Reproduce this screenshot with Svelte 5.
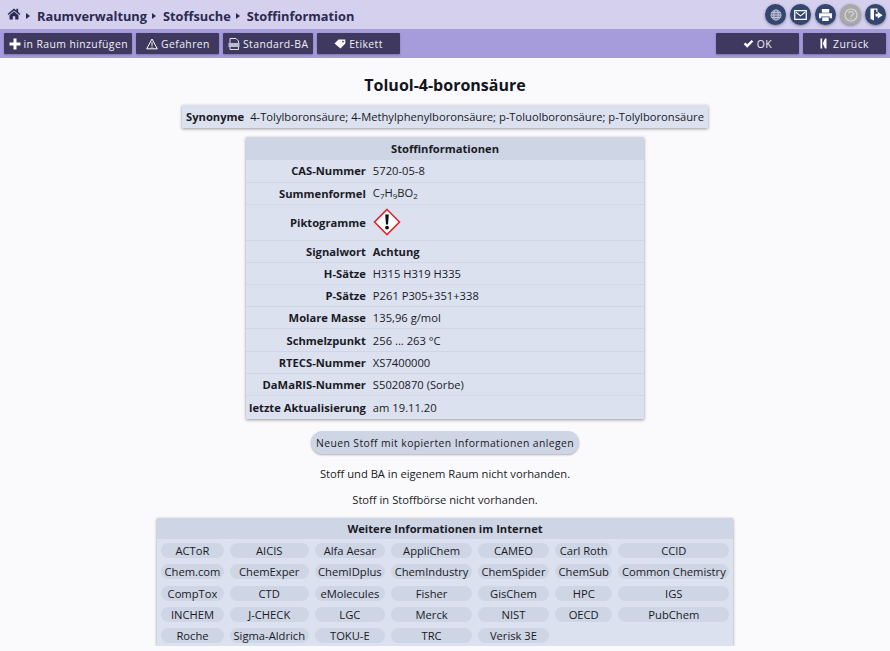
<script>
    const buttonsLeft = [
        { label: 'in Raum hinzufügen', icon: 'plus' },
        { label: 'Gefahren', icon: 'warn' },
        { label: 'Standard-BA', icon: 'pdf' },
        { label: 'Etikett', icon: 'tag' }
    ];

    const rows = [
        ['CAS-Nummer', '5720-05-8'],
        ['Summenformel', 'formula'],
        ['Piktogramme', 'ghs'],
        ['Signalwort', 'Achtung'],
        ['H-Sätze', 'H315 H319 H335'],
        ['P-Sätze', 'P261 P305+351+338'],
        ['Molare Masse', '135,96 g/mol'],
        ['Schmelzpunkt', '256 ... 263 °C'],
        ['RTECS-Nummer', 'XS7400000'],
        ['DaMaRIS-Nummer', 'S5020870 (Sorbe)'],
        ['letzte Aktualisierung', 'am 19.11.20']
    ];

    const links = [
        'ACToR', 'AICIS', 'Alfa Aesar', 'AppliChem', 'CAMEO', 'Carl Roth', 'CCID',
        'Chem.com', 'ChemExper', 'ChemIDplus', 'ChemIndustry', 'ChemSpider', 'ChemSub', 'Common Chemistry',
        'CompTox', 'CTD', 'eMolecules', 'Fisher', 'GisChem', 'HPC', 'IGS',
        'INCHEM', 'J-CHECK', 'LGC', 'Merck', 'NIST', 'OECD', 'PubChem',
        'Roche', 'Sigma-Aldrich', 'TOKU-E', 'TRC', 'Verisk 3E'
    ];
</script>

<header class="topbar">
    <nav class="crumbs">
        <svg class="home" viewBox="0 0 16 14" width="14" height="12">
            <path d="M8 0.5 L0.5 7 L1.6 8.2 L8 2.8 L14.4 8.2 L15.5 7 L12.8 4.6 V1 H10.8 V2.9 Z" fill="#2b2a50" />
            <path d="M8 4 L2.8 8.4 V13.5 H6.6 V9.6 H9.4 V13.5 H13.2 V8.4 Z" fill="#2b2a50" />
        </svg>
        <span class="arrow"></span><span>Raumverwaltung</span>
        <span class="arrow"></span><span>Stoffsuche</span>
        <span class="arrow"></span><span>Stoffinformation</span>
    </nav>
    <div class="rounds">
        <span class="round">
            <svg viewBox="0 0 12 12" width="12" height="12" fill="#6f7aa0" stroke="#c9c5d8" stroke-width="0.9">
                <circle cx="6" cy="6" r="5" /><ellipse cx="6" cy="6" rx="2.2" ry="5" /><path d="M1 6H11M1.7 3.5H10.3M1.7 8.5H10.3" />
            </svg>
        </span>
        <span class="round">
            <svg viewBox="0 0 14 11" width="13" height="10">
                <rect x="0.7" y="0.7" width="12.6" height="9.6" fill="#33466f" stroke="#fff" stroke-width="1.4" />
                <path d="M2 2.5 L7 6.5 L12 2.5" fill="none" stroke="#fff" stroke-width="1.2" />
            </svg>
        </span>
        <span class="round">
            <svg viewBox="0 0 14 13" width="13" height="12" fill="#fff">
                <path d="M3 0H11V4H3Z" />
                <path d="M0 4.5H14V10H11.5V8H2.5V10H0Z" />
                <path d="M3.5 9H10.5V13H3.5Z" />
            </svg>
        </span>
        <span class="round off">
            <svg viewBox="0 0 14 14" width="14" height="14" fill="none" stroke="#d6d6d6" stroke-width="1.2">
                <circle cx="7" cy="7" r="6" />
                <path d="M4.6 5.2 C4.8 3 9.4 3 9.4 5.4 C9.4 7 7 7 7 9" /><path d="M7 10V11.2" />
            </svg>
        </span>
        <span class="round">
            <svg viewBox="0 0 14 14" width="14" height="14" fill="#fff">
                <path d="M1.5 0.5H8.5V4H7.3V1.7H5V12.5L1.5 11Z" />
                <path d="M8.8 3.8 L13.5 7.2 L8.8 10.6 V8.6 H6.5 V5.8 H8.8 Z" />
            </svg>
        </span>
    </div>
</header>

<div class="toolbar">
    <div class="group">
        {#each buttonsLeft as b}
            <button class="tool">
                {#if b.icon === 'plus'}
                    <svg viewBox="0 0 12 12" width="12" height="12"><path d="M4.5 0.5H7.5V4.5H11.5V7.5H7.5V11.5H4.5V7.5H0.5V4.5H4.5Z" fill="#fff" /></svg>
                {:else if b.icon === 'warn'}
                    <svg viewBox="0 0 12 12" width="12" height="12" fill="none" stroke="#fff" stroke-width="1"><path d="M6 1 L11.3 10.8 H0.7 Z" /><path d="M6 4.2V7.8M6 8.6V9.8" /></svg>
                {:else if b.icon === 'pdf'}
                    <svg viewBox="0 0 12 12" width="12" height="12"><path d="M2 0.5H8 L10.5 3 V11.5 H2Z" fill="none" stroke="#dfe0ea" stroke-width="1" /><rect x="0.5" y="5" width="11" height="4" fill="#b9bdd0" /></svg>
                {:else}
                    <svg viewBox="0 0 12 10" width="12" height="10"><path d="M0.5 4.5 L4.5 0.6 H11.3 V4.6 L6.5 9.6 Z" fill="#fff" /><circle cx="9" cy="2.6" r="0.9" fill="#3f3960" /></svg>
                {/if}
                {b.label}
            </button>
        {/each}
    </div>
    <div class="group">
        <button class="tool">
            <svg viewBox="0 0 12 10" width="11" height="10"><path d="M0.8 5.2 L2.6 3.4 L4.6 5.4 L9.4 0.6 L11.2 2.4 L4.6 9 Z" fill="#fff" /></svg>
            OK
        </button>
        <button class="tool">
            <svg class="back" viewBox="0 0 7 11" width="7" height="11"><path d="M0.5 0.5H2.2V10.5H0.5ZM6.5 0.5V10.5H5 L2.8 5.5 L5 0.5Z" fill="#fff" /></svg>
            Zurück
        </button>
    </div>
</div>

<main class="content">
    <h1>Toluol-4-boronsäure</h1>

    <div class="synonyms"><b>Synonyme</b>4-Tolylboronsäure; 4-Methylphenylboronsäure; p-Toluolboronsäure; p-Tolylboronsäure</div>

    <table class="info">
        <thead>
            <tr><th colspan="2">Stoffinformationen</th></tr>
        </thead>
        <tbody>
            {#each rows as [name, value]}
                <tr>
                    <td class="name">{name}</td>
                    <td>
                        {#if value === 'formula'}
                            <span class="formula">C<sub>7</sub>H<sub>9</sub>BO<sub>2</sub></span>
                        {:else if value === 'ghs'}
                            <svg class="ghs" viewBox="0 0 28 28" width="28" height="28">
                                <path d="M14 1.5 L26.5 14 L14 26.5 L1.5 14 Z" fill="#fff" stroke="#e0262b" stroke-width="1.6" />
                                <path d="M12.2 6.5H15.8L15 16.5H13Z" fill="#111" />
                                <circle cx="14" cy="19.6" r="1.9" fill="#111" />
                            </svg>
                        {:else if value === 'Achtung'}
                            <b>{value}</b>
                        {:else}
                            {value}
                        {/if}
                    </td>
                </tr>
            {/each}
        </tbody>
    </table>

    <button class="pill-btn">Neuen Stoff mit kopierten Informationen anlegen</button>

    <p>Stoff und BA in eigenem Raum nicht vorhanden.</p>
    <p>Stoff in Stoffbörse nicht vorhanden.</p>

    <section class="links">
        <h2>Weitere Informationen im Internet</h2>
        <div class="grid">
            {#each links as link}
                <span class="link">{link}</span>
            {/each}
        </div>
    </section>
</main>

<style>
    :global(body) {
        margin: 0;
        background: #fafafc;
        font-family: "Open Sans", "Noto Sans", sans-serif;
        font-size: 11.2px;
        color: #1a1a24;
    }

    .topbar {
        height: 29px;
        background: #d4d0ee;
        display: flex;
        justify-content: space-between;
        align-items: center;
        padding: 0 4px 0 7px;
    }

    .crumbs {
        display: flex;
        align-items: center;
        padding-top: 3px;
        font-size: 12.8px;
        font-weight: 700;
        color: #2b2a50;
    }

    .home {
        margin-bottom: 4px;
    }

    .arrow {
        width: 0;
        height: 0;
        margin: 0 7px 0 5px;
        border-left: 4px solid #2b2a50;
        border-top: 3px solid transparent;
        border-bottom: 3px solid transparent;
    }

    .rounds {
        display: flex;
        gap: 4px;
    }

    .round {
        width: 21px;
        height: 21px;
        border-radius: 50%;
        background: #33466f;
        display: flex;
        align-items: center;
        justify-content: center;
        box-shadow: 0 1px 3px rgba(40, 40, 80, 0.5);
    }

    .round.off {
        background: #a9a9a9;
    }

    .toolbar {
        height: 29px;
        box-sizing: border-box;
        background: #a69bdb;
        display: flex;
        justify-content: space-between;
        align-items: flex-start;
        padding: 4px 4px 0 4px;
    }

    .group {
        display: flex;
        gap: 4px;
    }

    .tool {
        height: 21px;
        min-width: 83px;
        padding: 0 4.5px;
        border: none;
        border-radius: 1px;
        background: #3f3960;
        color: #f0f0f5;
        font-family: inherit;
        font-size: 10.4px;
        letter-spacing: 0.42px;
        display: flex;
        align-items: center;
        justify-content: center;
        gap: 3px;
        box-shadow: 0 1px 2px rgba(40, 40, 80, 0.35);
    }

    .back {
        margin-right: 3px;
    }

    .content {
        display: flex;
        flex-direction: column;
        align-items: center;
    }

    h1 {
        margin: 17px 0 9px;
        font-size: 16px;
        line-height: 21px;
        font-weight: 700;
        color: #14141c;
    }

    .synonyms {
        height: 23px;
        line-height: 23px;
        padding: 0 4px;
        background: #dbe1ef;
        box-shadow: 0 1px 3px rgba(0, 0, 0, 0.4);
        white-space: nowrap;
    }

    .synonyms b {
        margin-right: 6px;
    }

    .info {
        margin-top: 9px;
        width: 398px;
        border-collapse: collapse;
        background: #dbe1ef;
        box-shadow: 0 1px 3px rgba(0, 0, 0, 0.4);
    }

    .info th {
        height: 23px;
        padding: 0;
        background: #ced5e5;
        font-weight: 700;
    }

    .info td {
        box-sizing: border-box;
        height: 22.2px;
        padding: 0 3px 0 4px;
        border-top: 1px solid #cfd6e6;
    }

    .info tbody tr:first-child td {
        border-top: none;
        height: 22px;
    }

    .info tbody tr:last-child td {
        height: 23.5px;
    }

    .info td.name {
        width: 114px;
        padding: 0 3px;
        text-align: right;
        font-weight: 700;
        white-space: nowrap;
    }

    .formula {
        display: block;
        margin-top: -1px;
    }

    sub {
        font-size: 8px;
        line-height: 0;
        vertical-align: -2px;
    }

    .ghs {
        display: block;
        margin: 3px 0 4px;
    }

    .pill-btn {
        margin-top: 12px;
        height: 23px;
        padding: 0 5px;
        border: none;
        border-radius: 12px;
        background: #ced5e5;
        color: #1a1a24;
        font-family: inherit;
        font-size: 10.4px;
        letter-spacing: 0.4px;
        box-shadow: 0 1px 2px rgba(0, 0, 0, 0.3);
    }

    p {
        margin: 12px 0 0;
        line-height: 16px;
    }

    p + p {
        margin-top: 10px;
    }

    .links {
        margin-top: 10px;
        width: 576px;
        background: #dbe1ef;
        box-shadow: 0 1px 3px rgba(0, 0, 0, 0.4);
        padding-bottom: 3px;
    }

    h2 {
        margin: 0;
        height: 21px;
        line-height: 21px;
        background: #ced5e5;
        font-size: 11.2px;
        font-weight: 700;
        text-align: center;
    }

    .grid {
        display: grid;
        grid-template-columns: repeat(7, auto);
        gap: 6.25px 6px;
        padding: 4px 4px 0;
    }

    .link {
        height: 15px;
        line-height: 15px;
        padding: 0 3.5px;
        border-radius: 8px;
        background: #ced5e5;
        text-align: center;
        white-space: nowrap;
    }
</style>
